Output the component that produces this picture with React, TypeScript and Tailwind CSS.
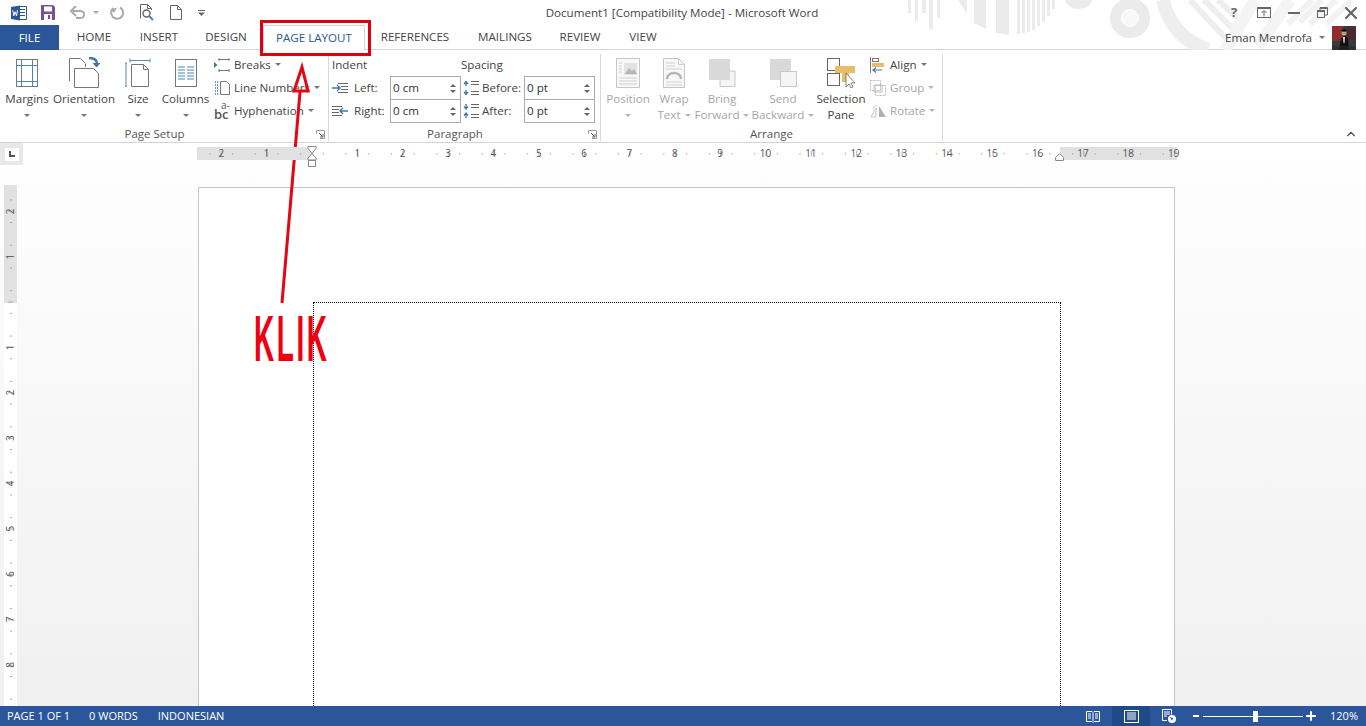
import React from 'react';
import { ChevronUp, Minus, Plus, X } from 'lucide-react';

const font = "font-['Open_Sans','Noto_Sans',sans-serif]";

const Caret = ({ className = 'border-t-[#777]' }: { className?: string }) => (
  <span className={`inline-block w-0 h-0 border-x-[3px] border-x-transparent border-t-[3px] ${className}`} />
);

const MarginsIcon = () => (
  <svg width="24" height="30" viewBox="0 0 24 30" fill="none">
    <rect x="1.5" y="1.5" width="21" height="27" fill="#fff" stroke="#777" />
    <path d="M6.5 1v28M17.5 1v28M1 7.5h22M1 23.5h22" stroke="#4f86b0" />
  </svg>
);

const OrientationIcon = () => (
  <svg width="32" height="32" viewBox="0 0 32 32" fill="none">
    <path d="M1.5 24V1.5h11l5 5V10" stroke="#777" fill="#fff" />
    <path d="M6.5 30.5V11.5h19l5 5v14z" stroke="#777" fill="#fff" />
    <path d="M21 1c5 0 8 2 8 6" stroke="#3f78a8" strokeWidth="2.4" />
    <path d="M24.5 6h8l-4 4.5z" fill="#3f78a8" />
  </svg>
);

const SizeIcon = () => (
  <svg width="26" height="30" viewBox="0 0 26 30" fill="none">
    <path d="M5 2.5h20M5 .5v4M25 .5v4" stroke="#5a8bb3" />
    <path d="M1 5v24M0 5h2M0 28h2" stroke="#5a8bb3" />
    <path d="M6.5 6.5h12l5 5v17h-17z" stroke="#777" fill="#fff" />
    <path d="M18.5 6.5v5h5" stroke="#777" />
  </svg>
);

const ColumnsIcon = () => (
  <svg width="24" height="30" viewBox="0 0 24 30" fill="none">
    <rect x="1.5" y="1.5" width="21" height="27" fill="#fff" stroke="#777" />
    <path d="M4 9h7M13 9h7M4 12h7M13 12h7M4 15h7M13 15h7M4 18h7M13 18h7M4 21h7M13 21h7" stroke="#4f86b0" />
  </svg>
);

const BreaksIcon = () => (
  <svg width="16" height="16" viewBox="0 0 16 16" fill="none">
    <path d="M5 2.5h10M5 13.5h10M5 1v3M15 1v3M5 12v3M15 12v3" stroke="#777" />
    <path d="M0 5l3.5 3L0 11z" fill="#3f78a8" />
  </svg>
);

const LineNumbersIcon = () => (
  <svg width="16" height="16" viewBox="0 0 16 16" fill="none">
    <path d="M6.5 1.5h6l3 3v10h-9z" stroke="#777" fill="#fff" />
    <path d="M1 2h3M1 5h3M1 8h3M1 11h3M1 14h3" stroke="#3f78a8" strokeWidth="1.4" strokeDasharray="1 1" />
  </svg>
);

const HyphenIcon = () => (
  <span className="relative block w-[14px] h-[16px] text-[#555]">
    <span className="absolute left-0 top-[6px] text-[13px] leading-[10px] font-semibold">bc</span>
    <span className="absolute left-[7px] -top-[2px] text-[10px] leading-[8px]">a-</span>
  </span>
);

const IndentIcon = ({ right }: { right?: boolean }) => (
  <svg width="16" height="12" viewBox="0 0 16 12" fill="none">
    {right ? (
      <>
        <path d="M0 1.5h10M0 4.5h7M0 7.5h7M0 10.5h10" stroke="#666" />
        <path d="M8 6h8M11 3L8 6l3 3" stroke="#3f78a8" strokeWidth="1.4" />
      </>
    ) : (
      <>
        <path d="M6 1.5h10M9 4.5h7M9 7.5h7M6 10.5h10" stroke="#666" />
        <path d="M0 6h8M5 3l3 3-3 3" stroke="#3f78a8" strokeWidth="1.4" />
      </>
    )}
  </svg>
);

const SpacingIcon = ({ after }: { after?: boolean }) => (
  <svg width="16" height="16" viewBox="0 0 16 16" fill="none">
    <path d="M8 1.5h8M8 4.5h8M8 11.5h8M8 14.5h8" stroke="#666" />
    {after ? (
      <path d="M3 1v4M1 3.5L3 6l2-2.5M3 15v-4M1 12.5L3 10l2 2.5" stroke="#3f78a8" strokeWidth="1.3" />
    ) : (
      <path d="M3 6V2M1 4l2-2.5L5 4M3 10v4M1 12l2 2.5L5 12" stroke="#3f78a8" strokeWidth="1.3" />
    )}
  </svg>
);

const PositionIcon = () => (
  <svg width="24" height="30" viewBox="0 0 24 30" fill="none">
    <rect x=".5" y=".5" width="23" height="29" fill="#f8f8f8" stroke="#c8c8c8" />
    <rect x="8" y="5" width="13" height="12" fill="#e2e2e2" />
    <path d="M9 16l4-6 3 3 2-2 3 5z" fill="#b5b5b5" />
    <path d="M3 5h3M3 8h3M3 11h3M3 14h3M3 20h18M3 23h18M3 26h18" stroke="#cfcfcf" />
  </svg>
);

const WrapIcon = () => (
  <svg width="22" height="30" viewBox="0 0 22 30" fill="none">
    <path d="M.5.5h15l6 6v23H.5z" fill="#f8f8f8" stroke="#c4c4c4" />
    <path d="M15.5.5v6h6M3 5h9M3 8h9M3 11h16M3 24h16M3 27h16" stroke="#cfcfcf" />
    <path d="M4 21c0-8 14-8 14 0" stroke="#b5b5b5" strokeWidth="2.5" />
  </svg>
);

const BringIcon = ({ back }: { back?: boolean }) => (
  <svg width="27" height="28" viewBox="0 0 27 28" fill="none">
    {back ? (
      <>
        <rect x="0" y="0" width="21" height="21" fill="#d9d9d9" />
        <rect x="10.5" y="12.5" width="16" height="15" fill="#f5f5f5" stroke="#c8c8c8" />
      </>
    ) : (
      <>
        <path d="M11 21.5v6h15V12h-5" fill="#f5f5f5" stroke="#c8c8c8" />
        <rect x="0" y="0" width="21" height="21" fill="#d9d9d9" />
      </>
    )}
  </svg>
);

const SelectionIcon = () => (
  <svg width="28" height="30" viewBox="0 0 28 30" fill="none">
    <rect x=".5" y=".5" width="12" height="12" fill="#fff" stroke="#666" />
    <rect x=".5" y="15.5" width="12" height="12" fill="#fff" stroke="#666" />
    <path d="M9 8h21v7h-7v9h-7v-9H9z" fill="#e8bd68" transform="translate(-1 0)" />
    <path d="M19 15l0 14 3-3 2 4 2-1-2-4h4z" fill="#fff" stroke="#666" strokeWidth=".8" />
  </svg>
);

const AlignIcon = () => (
  <svg width="15" height="16" viewBox="0 0 15 16" fill="none">
    <path d="M.5 0v16" stroke="#777" />
    <rect x="2.5" y="1.5" width="6" height="3" fill="#fff" stroke="#777" />
    <rect x="2" y="6" width="12" height="4" fill="#e8bd68" />
    <path d="M3 13h9M6 10.5L3 13l3 2.5" stroke="#3f78a8" strokeWidth="1.2" />
  </svg>
);

const GroupIcon = () => (
  <svg width="16" height="16" viewBox="0 0 16 16" fill="none">
    <rect x=".5" y=".5" width="10" height="10" stroke="#bbb" strokeDasharray="2 1" />
    <rect x="5.5" y="5.5" width="10" height="10" stroke="#bbb" strokeDasharray="2 1" />
    <path d="M4 5h8v7H4z" stroke="#bbb" />
  </svg>
);

const RotateIcon = () => (
  <svg width="17" height="14" viewBox="0 0 17 14" fill="none">
    <path d="M1 13L6 4v9z" stroke="#c4c4c4" fill="#fff" />
    <path d="M9 13V2l7 11z" fill="#b0b0b0" />
    <path d="M3 5c1-2 2-3 4-3" stroke="#c4c4c4" />
  </svg>
);

const Launcher = () => (
  <svg className="absolute right-[3px] bottom-[2px]" width="9" height="9" viewBox="0 0 9 9" fill="none">
    <path d="M.5 4V.5H8.500V8.500H4" stroke="#999" />
    <path d="M3 3l4 4M7 4v3H4" stroke="#666" />
  </svg>
);

const LargeButton = ({
  width,
  icon,
  lines,
  disabled,
  caret,
}: {
  width: string;
  icon: React.ReactNode;
  lines: string[];
  disabled?: boolean;
  caret?: 'below' | 'inline';
}) => (
  <div className={`flex flex-col items-center shrink-0 ${width} ${disabled ? 'text-[#a6a6a6]' : 'text-[#444]'}`}>
    <div className="h-[37px] flex items-center justify-center pt-[1px]">{icon}</div>
    {lines.map((line, i) => (
      <div key={line} className="h-[16px] leading-[16px] whitespace-nowrap flex items-center gap-[4px]">
        {line}
        {caret === 'inline' && i === lines.length - 1 && <Caret className={disabled ? 'border-t-[#b5b5b5]' : 'border-t-[#777]'} />}
      </div>
    ))}
    {caret === 'below' && (
      <div className="h-[16px] flex items-center">
        <Caret className={disabled ? 'border-t-[#b5b5b5]' : 'border-t-[#777]'} />
      </div>
    )}
  </div>
);

const SmallRow = ({
  icon,
  label,
  disabled,
  caret = true,
}: {
  icon: React.ReactNode;
  label: string;
  disabled?: boolean;
  caret?: boolean;
}) => (
  <div className={`h-[23px] flex items-center whitespace-nowrap ${disabled ? 'text-[#a6a6a6]' : 'text-[#444]'}`}>
    <span className="w-[20px] flex items-center shrink-0">{icon}</span>
    <span>{label}</span>
    {caret && (
      <span className="ml-[4px] flex">
        <Caret className={disabled ? 'border-t-[#b5b5b5]' : 'border-t-[#777]'} />
      </span>
    )}
  </div>
);

const Spinner = ({ value, width }: { value: string; width: string }) => (
  <div className={`h-[24px] -mb-px border border-[#ababab] bg-white flex items-center justify-between pl-[2px] pr-[3px] text-[#333] ${width}`}>
    <span>{value}</span>
    <span className="flex flex-col gap-[3px] pr-[1px]">
      <span className="w-0 h-0 border-x-[3px] border-x-transparent border-b-[3px] border-b-[#666]" />
      <span className="w-0 h-0 border-x-[3px] border-x-transparent border-t-[3px] border-t-[#666]" />
    </span>
  </div>
);

const Group = ({ width, label, launcher, children }: { width: string; label: string; launcher?: boolean; children: React.ReactNode }) => (
  <div className={`relative shrink-0 h-[87px] mt-[4px] border-r border-[#d8d8d8] flex flex-col ${width}`}>
    <div className="h-[73px] flex">{children}</div>
    <div className={`h-[14px] leading-[14px] text-center text-[#555] text-[11.5px] ${launcher ? 'pr-[19px]' : ''}`}>{label}</div>
    {launcher && <Launcher />}
  </div>
);

const TitleArt = () => (
  <svg className="absolute inset-0 pointer-events-none" width="1366" height="50" viewBox="0 0 1366 50" fill="none">
    <g fill="#ebebeb">
      <rect x="908" y="0" width="3" height="13" />
      <rect x="915" y="0" width="3" height="21" />
      <rect x="922" y="0" width="4" height="13" />
      <rect x="929" y="0" width="4" height="29" />
      <rect x="937" y="0" width="3" height="18" />
      <path d="M958 0l9 14V0z" />
      <path d="M974 0h12v29l-12-6z" />
      <path d="M996 0h13v35l-13-2z" />
      <rect x="1017" y="0" width="3" height="34" />
      <rect x="1022" y="0" width="3" height="33" />
      <rect x="1027" y="0" width="3" height="32" />
      <rect x="1032" y="0" width="3" height="30" />
      <rect x="1037" y="0" width="3" height="26" />
      <rect x="1042" y="0" width="3" height="22" />
      <rect x="1047" y="0" width="3" height="16" />
      <rect x="1052" y="0" width="3" height="9" />
      <path d="M1065 0h27c-2 6-7 9-13.500 9S1067 6 1065 0z" />
    </g>
    <circle cx="1130" cy="18" r="14.500" stroke="#ebebeb" strokeWidth="11" />
    <circle cx="1130" cy="18" r="8" fill="#f8f8f8" />
    <g stroke="#eeeeee" strokeWidth="6">
      <path d="M1163 0c5 25 22 42 45 50" strokeWidth="14" />
      <path d="M1190 0l42 45M1204 0l40 40M1218 0l26 24" />
      <path d="M1255 0l-30 50M1290 0l-32 46" strokeWidth="12" stroke="#f4f4f4" />
      <path d="M1288 24l24-24M1300 22l22-22M1310 24l26-24M1326 24l26-24" stroke="#f2f2f2" />
    </g>
  </svg>
);

const WordIcon = () => (
  <svg width="16" height="16" viewBox="0 0 16 16" fill="none">
    <path d="M7 1.500h8.500v13H7z" fill="#fff" stroke="#2b579a" />
    <path d="M9 4.500h5M9 7.500h5M9 10.500h5" stroke="#2b579a" />
    <path d="M0 2l9-1.500v15L0 14z" fill="#2b579a" />
    <path d="M1.800 5.200l1 5.600 1.400-4 1.300 4 1-5.600" stroke="#fff" strokeWidth="1" />
  </svg>
);

const QuickAccess = () => (
  <div className="flex items-center h-full pl-[11px]">
    <WordIcon />
    <svg className="ml-[14px]" width="14" height="15" viewBox="0 0 14 15">
      <path d="M0 0h12l2 2v13H0z" fill="#7a4f96" />
      <rect x="3" y="1.500" width="8" height="5" fill="#fff" />
      <rect x="3" y="9" width="8" height="6" fill="#fff" />
      <rect x="7" y="10" width="2" height="4" fill="#7a4f96" />
    </svg>
    <svg className="ml-[15px]" width="15" height="13" viewBox="0 0 15 13" fill="none">
      <path d="M3 5h7c6 0 5 7 0 7H6" stroke="#aaa" strokeWidth="2" />
      <path d="M6 0L1 5l5 5" stroke="#aaa" strokeWidth="2" />
    </svg>
    <span className="ml-[8px] flex"><Caret className="border-t-[#aaa]" /></span>
    <svg className="ml-[11px]" width="14" height="14" viewBox="0 0 14 14" fill="none">
      <path d="M10 1.500A6 6 0 1 1 3.500 2" stroke="#aaa" strokeWidth="2" />
      <path d="M6 0v6H1z" fill="#aaa" transform="rotate(30 4 3)" />
    </svg>
    <svg className="ml-[16px]" width="15" height="17" viewBox="0 0 15 17" fill="none">
      <path d="M.5 14.500V.5h7l4 4V6" stroke="#666" />
      <path d="M7.500.5v4h4" stroke="#666" />
      <circle cx="6.500" cy="9.500" r="3.500" stroke="#666" strokeWidth="1.400" />
      <path d="M9 12l4 4" stroke="#4f86b0" strokeWidth="2" />
    </svg>
    <svg className="ml-[15px]" width="12" height="15" viewBox="0 0 12 15" fill="none">
      <path d="M.5.500h7l4 4v10H.5z" fill="#fff" stroke="#666" />
      <path d="M7.500.5v4h4" stroke="#666" />
    </svg>
    <svg className="ml-[16px]" width="7" height="7" viewBox="0 0 7 7">
      <path d="M0 1h7v1H0z" fill="#666" />
      <path d="M0 3.500h7L3.500 7z" fill="#666" />
    </svg>
  </div>
);

const WindowControls = () => (
  <div className="flex items-center h-full">
    <span className="font-bold text-[#666] text-[13px] w-[12px] text-center">?</span>
    <svg className="ml-[17px]" width="14" height="11" viewBox="0 0 14 11" fill="none">
      <rect x=".5" y=".5" width="13" height="10" stroke="#666" />
      <path d="M1 1.500h12" stroke="#666" />
      <path d="M7 9.500V4M4.500 6L7 3.500 9.500 6" stroke="#666" />
    </svg>
    <Minus className="ml-[14px] text-[#666]" size={18} strokeWidth={2.4} />
    <svg className="ml-[14px]" width="11" height="11" viewBox="0 0 11 11" fill="none">
      <rect x=".5" y="3.500" width="7" height="7" stroke="#666" />
      <path d="M3 3V.5h7.500V8H8" stroke="#666" />
      <path d="M.5 4.500h7M3 1.500h7" stroke="#666" />
    </svg>
    <X className="ml-[13px] mr-[5px] text-[#666]" size={20} strokeWidth={2.6} />
  </div>
);

const Avatar = () => (
  <svg width="24" height="24" viewBox="0 0 24 24">
    <rect width="24" height="24" fill="#3a3a3e" />
    <rect width="11" height="15" fill="#8a2f2c" />
    <rect x="14" y="2" width="10" height="12" fill="#4a2a30" />
    <path d="M7 24l2-12 4-2 3 2 1 12z" fill="#111" />
    <circle cx="12" cy="7" r="2.500" fill="#c99a7c" />
    <path d="M8.500 4.500L12 3l3.500 1.500L12 6z" fill="#0c0c0c" />
    <path d="M11 11h2l-.5 6h-1z" fill="#ddd" />
    <rect y="20" width="24" height="4" fill="#2a2a2a" opacity=".6" />
  </svg>
);

const HorizontalRuler = () => (
  <svg width="986" height="24" viewBox="0 0 986 24" fill="none" className="shrink-0">
    <rect x="0" y="4" width="980" height="13" fill="#e1e1e1" />
    <rect x="114" y="4" width="749" height="13" fill="#fff" />
    {Array.from({ length: 88 }, (_, i) => {
      const x = 115 + (i - 10) * 11.35;
      if (i % 4 === 0 || x > 978) return null;
      return i % 2 === 0 ? (
        <path key={i} d={`M${x} 8v5`} stroke="#a8a8a8" />
      ) : (
        <path key={i} d={`M${x} 10v1.500`} stroke="#a8a8a8" />
      );
    })}
    {[-2, -1, 1, 2, 3, 4, 5, 6, 7, 8, 9, 10, 11, 12, 13, 14, 15, 16, 17, 18, 19].map((n) => (
      <text key={n} x={115 + n * 45.35} y="14" textAnchor="middle" fontSize="10" fill="#555" fontFamily="Open Sans, sans-serif">
        {Math.abs(n)}
      </text>
    ))}
    <path d="M111 3.500h8v2l-4 5-4-5zM111 17v-2l4-4.500 4 4.500v2z" fill="#fff" stroke="#8a8a8a" />
    <rect x="111.500" y="17.500" width="7" height="6" fill="#fff" stroke="#8a8a8a" />
    <path d="M858.500 17.500v-3l4-4 4 4v3z" fill="#fff" stroke="#8a8a8a" />
  </svg>
);

const VerticalRuler = () => (
  <svg width="14" height="522" viewBox="0 0 14 522" fill="none">
    <rect x="0" y="0" width="13" height="522" fill="#fff" />
    <rect x="0" y="0" width="13" height="118" fill="#e1e1e1" />
    {Array.from({ length: 48 }, (_, i) => {
      const y = 117 + (i - 10) * 11.35;
      if (i % 4 === 2) return <path key={i} d={`M4 ${y}h5`} stroke="#a8a8a8" />;
      if (i % 2 === 1) return <path key={i} d={`M6 ${y}h2`} stroke="#a8a8a8" />;
      return null;
    })}
    {[-2, -1, 1, 2, 3, 4, 5, 6, 7, 8].map((n) => (
      <text
        key={n}
        transform={`translate(10 ${117 + n * 45.35}) rotate(-90)`}
        textAnchor="middle"
        fontSize="10"
        fill="#555"
        fontFamily="Open Sans, sans-serif"
      >
        {Math.abs(n)}
      </text>
    ))}
  </svg>
);

const StatusBar = () => (
  <div className="h-[20px] shrink-0 bg-[#2b579a] text-white text-[11px] flex items-center">
    <span className="ml-[7px]">PAGE 1 OF 1</span>
    <span className="ml-[19px]">0 WORDS</span>
    <span className="ml-[20px]">INDONESIAN</span>
    <div className="ml-auto flex items-center h-full">
      <svg width="14" height="13" viewBox="0 0 14 13" fill="none">
        <path d="M.5 1.500h5.500L7 2.500l1-1h5.500v10H8l-1 1-1-1H.5z" stroke="#fff" />
        <path d="M2 4h3M2 6h3M2 8h3M9 4h3M9 6h3M9 8h3M7 3v8" stroke="#fff" />
      </svg>
      <div className="ml-[12px] w-[38px] h-full bg-[#1f4a8a] flex items-center justify-center">
        <svg width="15" height="13" viewBox="0 0 15 13" fill="none">
          <rect x=".5" y=".5" width="14" height="12" stroke="#fff" />
          <path d="M3 3h9M3 5h9M3 7h9M3 9h9" stroke="#fff" />
        </svg>
      </div>
      <svg className="ml-[12px]" width="14" height="14" viewBox="0 0 14 14" fill="none">
        <path d="M5 11.500H.5V.5h9v5" stroke="#fff" />
        <path d="M2 3h6M2 5h6M2 7h3" stroke="#fff" />
        <circle cx="10" cy="10" r="4" fill="#fff" />
        <path d="M8 8l3 1-1 3z" fill="#2b579a" />
      </svg>
      <span className="ml-[17px] w-[6px] h-[2px] bg-white" />
      <div className="relative ml-[4px] w-[100px] h-[1px] bg-white">
        <span className="absolute left-[50px] -top-[5px] w-[5px] h-[11px] bg-white" />
      </div>
      <Plus className="ml-[1px] text-white" size={14} strokeWidth={3.5} />
      <span className="ml-[12px] mr-[8px]">120%</span>
    </div>
  </div>
);

const Tab = ({ label, width }: { label: string; width: string }) => (
  <div className={`text-center text-[#444] leading-[24px] shrink-0 ${width}`}>{label}</div>
);

export default function App() {
  return (
    <div className={`relative w-[1366px] h-[726px] overflow-hidden flex flex-col bg-white text-[11.6px] ${font}`}>
      {/* title bar + tabs share the artwork */}
      <div className="relative h-[50px] shrink-0 border-b border-[#d4d4d4]">
        <TitleArt />
        <div className="relative h-[25px] flex items-center justify-between">
          <QuickAccess />
          <div className="absolute left-[682px] top-[4px] -translate-x-1/2 text-[#444] whitespace-nowrap">
            Document1 [Compatibility Mode] - Microsoft Word
          </div>
          <WindowControls />
        </div>
        <div className="relative h-[25px] flex items-start">
          <div className="w-[59px] h-[25px] bg-[#2b579a] text-white text-center leading-[25px] shrink-0">FILE</div>
          <Tab label="HOME" width="w-[70px]" />
          <Tab label="INSERT" width="w-[60px]" />
          <Tab label="DESIGN" width="w-[74px]" />
          <div className="w-[102px] h-[25px] shrink-0 bg-white border-x border-t border-[#d4d4d4] text-center text-[#2b579a] leading-[23px]">PAGE LAYOUT</div>
          <Tab label="REFERENCES" width="w-[100px]" />
          <Tab label="MAILINGS" width="w-[80px]" />
          <Tab label="REVIEW" width="w-[70px]" />
          <Tab label="VIEW" width="w-[56px]" />
          <div className="ml-auto flex items-center h-[25px] text-[#444]">
            <span>Eman Mendrofa</span>
            <span className="ml-[7px] mr-[7px] flex"><Caret /></span>
            <span className="mr-[10px] flex"><Avatar /></span>
          </div>
        </div>
      </div>

      {/* ribbon */}
      <div className="relative h-[93px] shrink-0 border-b border-[#d4d4d4] flex items-start">
        <Group width="w-[329px]" label="Page Setup" launcher>
          <LargeButton width="w-[54px]" icon={<MarginsIcon />} lines={['Margins']} caret="below" />
          <LargeButton width="w-[60px]" icon={<OrientationIcon />} lines={['Orientation']} caret="below" />
          <LargeButton width="w-[48px]" icon={<SizeIcon />} lines={['Size']} caret="below" />
          <LargeButton width="w-[47px]" icon={<ColumnsIcon />} lines={['Columns']} caret="below" />
          <div className="ml-[5px] -mt-px flex flex-col">
            <SmallRow icon={<BreaksIcon />} label="Breaks" />
            <SmallRow icon={<LineNumbersIcon />} label="Line Numbers" />
            <SmallRow icon={<HyphenIcon />} label="Hyphenation" />
          </div>
        </Group>

        <Group width="w-[272px]" label="Paragraph" launcher>
          <div className="flex flex-col pl-[3px]">
            <div className="h-[22px] leading-[22px] text-[#444]">Indent</div>
            <div className="h-[23px] flex items-center">
              <IndentIcon />
              <span className="ml-[6px] w-[36px] text-[#444]">Left:</span>
              <Spinner value="0 cm" width="w-[71px]" />
            </div>
            <div className="h-[23px] flex items-center">
              <IndentIcon right />
              <span className="ml-[6px] w-[36px] text-[#444]">Right:</span>
              <Spinner value="0 cm" width="w-[71px]" />
            </div>
          </div>
          <div className="flex flex-col pl-[2px]">
            <div className="h-[22px] leading-[22px] text-[#444] -ml-[2px]">Spacing</div>
            <div className="h-[23px] flex items-center">
              <SpacingIcon />
              <span className="ml-[3px] w-[42px] text-[#444]">Before:</span>
              <Spinner value="0 pt" width="w-[71px]" />
            </div>
            <div className="h-[23px] flex items-center">
              <SpacingIcon after />
              <span className="ml-[3px] w-[42px] text-[#444]">After:</span>
              <Spinner value="0 pt" width="w-[71px]" />
            </div>
          </div>
        </Group>

        <Group width="w-[342px]" label="Arrange">
          <LargeButton width="w-[54px]" icon={<PositionIcon />} lines={['Position']} caret="below" disabled />
          <LargeButton width="w-[38px]" icon={<WrapIcon />} lines={['Wrap', 'Text']} caret="inline" disabled />
          <LargeButton width="w-[58px]" icon={<BringIcon />} lines={['Bring', 'Forward']} caret="inline" disabled />
          <LargeButton width="w-[64px]" icon={<BringIcon back />} lines={['Send', 'Backward']} caret="inline" disabled />
          <LargeButton width="w-[52px]" icon={<SelectionIcon />} lines={['Selection', 'Pane']} />
          <div className="ml-[3px] -mt-px flex flex-col">
            <SmallRow icon={<AlignIcon />} label="Align" />
            <SmallRow icon={<GroupIcon />} label="Group" disabled />
            <SmallRow icon={<RotateIcon />} label="Rotate" disabled />
          </div>
        </Group>

        <ChevronUp className="absolute right-[8px] bottom-[1px] text-[#555]" size={14} strokeWidth={2} />
      </div>

      {/* ruler strip */}
      <div className="relative z-10 h-[21px] shrink-0 flex items-start">
        <div className="w-[23px] h-[22px] bg-[#e8e8e8] flex items-center justify-center shrink-0">
          <div className="w-[14px] h-[13px] bg-white flex items-center justify-center">
            <span className="w-[6px] h-[6px] border-l-2 border-b-2 border-[#555]" />
          </div>
        </div>
        <div className="ml-[174px] shrink-0"><HorizontalRuler /></div>
      </div>

      {/* document area */}
      <div className="flex-1 min-h-0 overflow-hidden flex bg-gradient-to-b from-[#fefefe] to-[#f0f0f0]">
        <div className="ml-[4px] mt-[21px] shrink-0"><VerticalRuler /></div>
        <div className="ml-[180px] mt-[23px] w-[977px] h-[600px] shrink-0 bg-white border border-[#c6c6c6] pl-[114px] pt-[114px]">
          <div className="w-[748px] h-[500px] border-l border-t border-r border-dotted border-black" />
        </div>
      </div>

      <StatusBar />

      {/* annotation drawn on top of the screenshot */}
      <div className="absolute left-[260px] top-[20px] w-[111px] h-[36px] border-[3px] border-[#dc0010]" />
      <svg className="absolute left-[270px] top-[50px]" width="50" height="260" viewBox="0 0 50 260" fill="none">
        <path d="M12 253L30 42" stroke="#e30613" strokeWidth="3" />
        <path d="M32 17L24 41h14z" stroke="#e30613" strokeWidth="3" />
      </svg>
      <div className="absolute left-[254px] top-[301px] font-['Liberation_Sans',sans-serif] font-bold text-[#ee0010] text-[65px] leading-[76px] tracking-[6px] scale-x-[0.43] origin-left whitespace-nowrap">
        KLIK
      </div>
    </div>
  );
}
